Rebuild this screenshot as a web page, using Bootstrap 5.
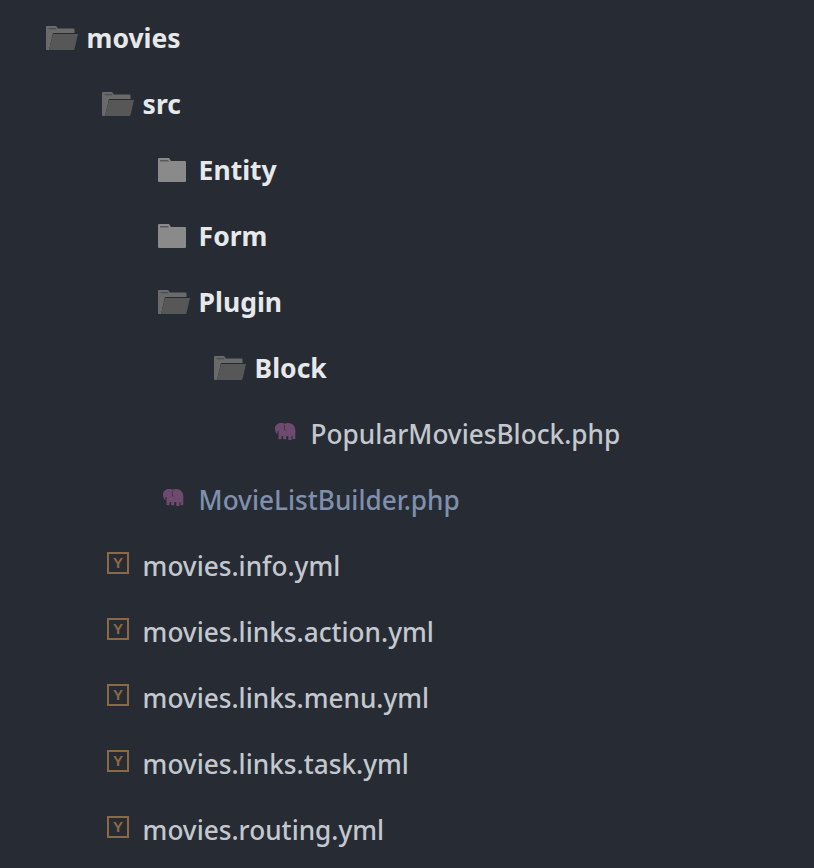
<!DOCTYPE html>
<html lang="en"><head><meta charset="utf-8"><title>Tree</title>
<link href="https://cdn.jsdelivr.net/npm/bootstrap@5.3.0/dist/css/bootstrap.min.css" rel="stylesheet">
<style>
html,body{height:100%}
body{background:#272b33;font-family:"Noto Sans","Open Sans",sans-serif;overflow:hidden}
.tree-root{padding:5px 0 0 46px;margin:0}
.tree-sub{padding-left:56px;margin:0}
.tree-row{height:66px;font-size:26.2px;color:#c3c7ce;line-height:1;font-weight:500}
.tree-row.is-dir{color:#e6e8ea;font-weight:700;font-size:26.5px}
.tree-row.is-mod{color:#7f90ad}
.slot{width:40.6px;flex:none;height:24px}
.slot svg{display:block}
.ic-php{margin-left:5px;margin-top:1px}
.ic-yml{margin-left:5px;margin-top:-2px;width:22px;height:22px;border:2px solid #8a6a42;color:#8a6a42;font:700 15px/18px "Liberation Sans",sans-serif;text-align:center}
</style></head>
<body>
<svg width="0" height="0" class="d-block" aria-hidden="true"><defs>
<symbol id="f-open" viewBox="0 0 32 24"><path fill="#6a6a6a" d="M1 0h9l2 2.500h15.500a1 1 0 0 1 1 1V7H7L3 24H1a1 1 0 0 1-1-1V1a1 1 0 0 1 1-1z"/><path fill="#4a4c50" d="M2.500 2h7l1 1.300h-8z"/><path fill="#575757" d="M7 8h25l-3.500 15a1.300 1.300 0 0 1-1.300 1H3z"/></symbol>
<symbol id="f-closed" viewBox="0 0 28 24"><path fill="#8a8a8a" d="M1 0h10l2 3h14a1 1 0 0 1 1 1v19a1 1 0 0 1-1 1H1a1 1 0 0 1-1-1V1a1 1 0 0 1 1-1z"/><path fill="#55585c" d="M2 2h8l1 1.500H2z"/></symbol>
<symbol id="php" viewBox="0 0 23 17"><path fill="#6f4a6f" d="M6 0c-3 0-6 2-6 5.500 0 2 .8 4.500 2 5.500.4.300.8 0 .6-.6C2 9 2.500 8 3.500 8v7.500c0 .5.200.8.700.8h1.800c.4 0 .6-.3.600-.7V13h1.500v2.600c0 .4.200.7.600.7h2c.4 0 .6-.3.600-.7V13h2v3.600c0 .4.200.7.600.7h2c.4 0 .6-.3.600-.7V13h1v2.600c0 .4.200.7.600.7h1.500c.5 0 .7-.3.700-.7V7c0-4-3-7-7-7-1.500 0-2.500.4-3.500.9C10 .3 8 0 6 0z"/><path fill="#272b33" d="M10 2c-.8 1.500-.8 4 .6 5.500l-.4.500C8.500 6.500 8.500 3.500 9.500 1.800z"/></symbol>
</defs></svg>
<ul class="tree-root list-unstyled">
<li><div class="tree-row is-dir d-flex align-items-center"><div class="slot"><svg width="32" height="24"><use href="#f-open"/></svg></div>movies</div>
 <ul class="tree-sub list-unstyled">
 <li><div class="tree-row is-dir d-flex align-items-center"><div class="slot"><svg width="32" height="24"><use href="#f-open"/></svg></div>src</div>
  <ul class="tree-sub list-unstyled">
  <li class="tree-row is-dir d-flex align-items-center"><div class="slot"><svg width="28" height="24"><use href="#f-closed"/></svg></div>Entity</li>
  <li class="tree-row is-dir d-flex align-items-center"><div class="slot"><svg width="28" height="24"><use href="#f-closed"/></svg></div>Form</li>
  <li><div class="tree-row is-dir d-flex align-items-center"><div class="slot"><svg width="32" height="24"><use href="#f-open"/></svg></div>Plugin</div>
   <ul class="tree-sub list-unstyled">
   <li><div class="tree-row is-dir d-flex align-items-center"><div class="slot"><svg width="32" height="24"><use href="#f-open"/></svg></div>Block</div>
    <ul class="tree-sub list-unstyled">
    <li class="tree-row d-flex align-items-center"><div class="slot"><svg class="ic-php" width="23" height="17"><use href="#php"/></svg></div>PopularMoviesBlock.php</li>
    </ul></li>
   </ul></li>
  <li class="tree-row is-mod d-flex align-items-center"><div class="slot"><svg class="ic-php" width="23" height="17"><use href="#php"/></svg></div>MovieListBuilder.php</li>
  </ul></li>
 <li class="tree-row d-flex align-items-center"><div class="slot"><div class="ic-yml">Y</div></div>movies.info.yml</li>
 <li class="tree-row d-flex align-items-center"><div class="slot"><div class="ic-yml">Y</div></div>movies.links.action.yml</li>
 <li class="tree-row d-flex align-items-center"><div class="slot"><div class="ic-yml">Y</div></div>movies.links.menu.yml</li>
 <li class="tree-row d-flex align-items-center"><div class="slot"><div class="ic-yml">Y</div></div>movies.links.task.yml</li>
 <li class="tree-row d-flex align-items-center"><div class="slot"><div class="ic-yml">Y</div></div>movies.routing.yml</li>
 </ul></li>
</ul>
</body></html>
